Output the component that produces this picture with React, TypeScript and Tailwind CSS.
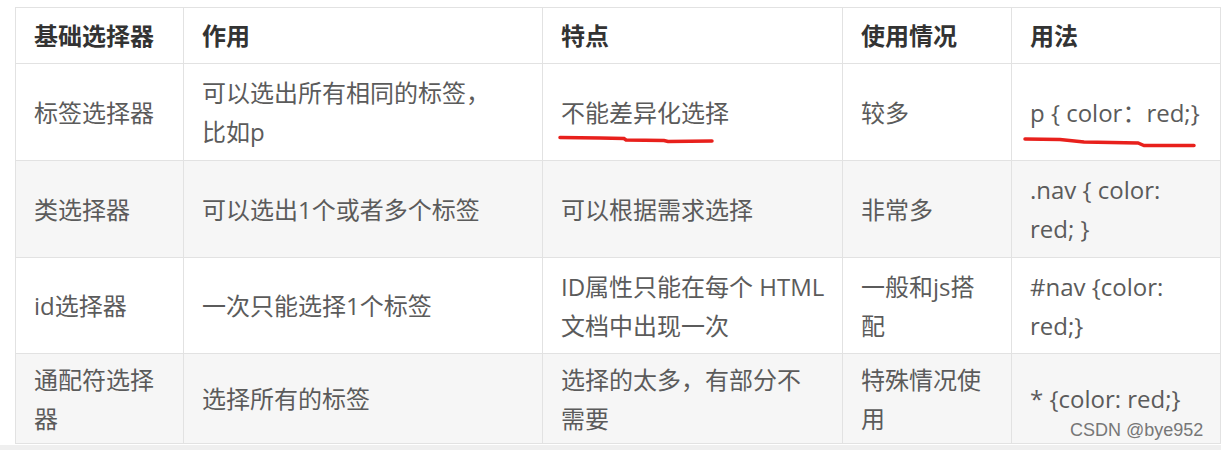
import React from 'react';

type Row = {
    cells: string[][];
    height: string;
    shaded: boolean;
};

const headers = ['基础选择器', '作用', '特点', '使用情况', '用法'];

const rows: Row[] = [
    {
        cells: [['标签选择器'], ['可以选出所有相同的标签，', '比如p'], ['不能差异化选择'], ['较多'], ['p { color：red;}']],
        height: 'h-[97px]',
        shaded: false,
    },
    {
        cells: [['类选择器'], ['可以选出1个或者多个标签'], ['可以根据需求选择'], ['非常多'], ['.nav { color:', 'red; }']],
        height: 'h-[97px]',
        shaded: true,
    },
    {
        cells: [['id选择器'], ['一次只能选择1个标签'], ['ID属性只能在每个 HTML', '文档中出现一次'], ['一般和js搭', '配'], ['#nav {color:', 'red;}']],
        height: 'h-[96px]',
        shaded: false,
    },
    {
        cells: [['通配符选择', '器'], ['选择所有的标签'], ['选择的太多，有部分不', '需要'], ['特殊情况使', '用'], ['* {color: red;}']],
        height: 'h-[90px]',
        shaded: true,
    },
];

const colWidths = ['w-[168px]', 'w-[359px]', 'w-[300px]', 'w-[169px]', 'w-[209px]'];

const App: React.FC = () => {
    return (
        <div
            className="relative w-[1221px] h-[450px] overflow-hidden bg-white"
            style={{ fontFamily: '"Open Sans", "Noto Sans CJK SC", sans-serif' }}
        >
            <div className="pt-[7px] pl-[15px]">
                <div className="inline-flex flex-col border-l border-t border-[#e2e2e2]">
                    {/* header */}
                    <div className="flex h-[56px]">
                        {headers.map((h, i) => (
                            <div
                                key={h}
                                className={`${colWidths[i]} flex items-center pl-[18px] border-r border-b border-[#e2e2e2] text-[24px] font-bold text-[#333]`}
                            >
                                {h}
                            </div>
                        ))}
                    </div>

                    {rows.map((row, r) => (
                        <div key={r} className={`flex ${row.height} ${row.shaded ? 'bg-[#f6f6f6]' : 'bg-white'}`}>
                            {row.cells.map((lines, i) => (
                                <div
                                    key={i}
                                    className={`${colWidths[i]} relative flex flex-col justify-center pl-[18px] border-r border-b border-[#e2e2e2] text-[24px] leading-[39px] text-[#5b5b5b]`}
                                >
                                    {lines.map((l, j) => (
                                        <span key={j} className="whitespace-pre">{l}</span>
                                    ))}
                                </div>
                            ))}
                        </div>
                    ))}
                </div>
            </div>

            {/* hand-drawn red underlines */}
            <svg className="absolute left-0 top-0 pointer-events-none" width="1221" height="450">
                <path
                    d="M560 137.5 L600 138 L624 138.5 L626 140 L664 140.5 L668 141.5 L712 141"
                    stroke="#e8201c"
                    strokeWidth="3.5"
                    fill="none"
                    strokeLinecap="round"
                />
                <path
                    d="M1025 139 L1060 139.5 L1084 142 L1138 143 L1144 145.5 L1194 145.5"
                    stroke="#e8201c"
                    strokeWidth="3.5"
                    fill="none"
                    strokeLinecap="round"
                />
            </svg>

            <div
                className="absolute left-[1070px] top-[420px] text-[18px] leading-[20px] text-[#777]"
                style={{ fontFamily: '"Liberation Sans", sans-serif' }}
            >
                CSDN @bye952
            </div>
            <div className="absolute left-0 bottom-0 w-full h-[5px] bg-[#efefef]" />
        </div>
    );
};

export default App;
